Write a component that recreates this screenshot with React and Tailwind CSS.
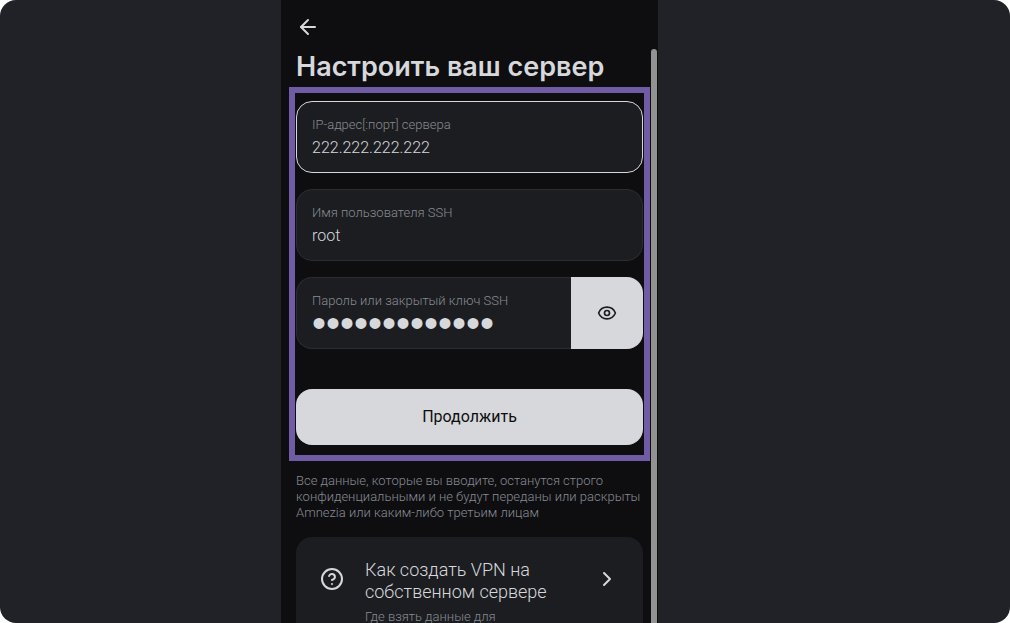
import { ArrowLeft, ChevronRight, CircleQuestionMark, Eye } from "lucide-react";

function Field({ id, label, value, type = "text", active, action }) {
  return (
    <div className="flex h-[72px]">
      <div
        className={
          "flex min-w-0 flex-1 flex-col border bg-[#1c1d21] px-[15px] pt-[15px] " +
          (active ? "border-[#d7d8db] " : "border-[#2c2d30] ") +
          (action ? "rounded-l-2xl border-r-0" : "rounded-2xl")
        }
      >
        <label htmlFor={id} className="text-[13px] leading-4 text-[#878b91]">
          {label}
        </label>
        <input
          id={id}
          type={type}
          defaultValue={value}
          className={
            "w-full bg-transparent text-[#d7d8db] outline-none " +
            (type === "password"
              ? "mt-0.5 h-6 font-['Liberation_Sans',sans-serif] text-[40px] leading-6"
              : "mt-[3px] h-6 text-base")
          }
        />
      </div>
      {action}
    </div>
  );
}

function RevealButton() {
  return (
    <button
      type="button"
      aria-label="Показать пароль"
      className="flex w-[72px] items-center justify-center rounded-r-2xl bg-[#d7d8db] text-[#1c1d21]"
    >
      <Eye size={20} strokeWidth={2} />
    </button>
  );
}

export default function App() {
  return (
    <div className="h-screen bg-white font-['Roboto',sans-serif] font-light">
      <div className="grid h-full grid-cols-[281fr_377px_352fr] overflow-hidden rounded-2xl bg-[#212227]">
        <main className="col-start-2 flex min-h-0 overflow-hidden bg-[#0e0e11] pl-2">
          <div className="min-w-0 flex-1">
            <button type="button" aria-label="Назад" className="mt-[15px] ml-[7px] block text-[#d7d8db]">
              <ArrowLeft size={24} />
            </button>
            <h1 className="mt-2 pl-[7px] font-['Inter',sans-serif] text-[27px] leading-10 font-semibold whitespace-nowrap text-[#d7d8db]">
              Настроить ваш сервер
            </h1>
            <form className="flex flex-col gap-4 border-6 border-[#6f5ca4] px-px pt-2 pb-[10px]">
              <Field id="host" label="IP-адрес[:порт] сервера" value="222.222.222.222" active />
              <Field id="user" label="Имя пользователя SSH" value="root" />
              <Field
                id="secret"
                label="Пароль или закрытый ключ SSH"
                value="serverpasswrd"
                type="password"
                action={<RevealButton />}
              />
              <button type="button" className="mt-6 h-14 rounded-2xl bg-[#d7d8db] text-base font-normal text-[#0e0e11]">
                Продолжить
              </button>
            </form>
            <p className="mt-3 pl-[7px] text-[13px] leading-4 whitespace-nowrap text-[#878b91]">
              Все данные, которые вы вводите, останутся строго
              <br />
              конфиденциальными и не будут переданы или раскрыты
              <br />
              Amnezia или каким-либо третьим лицам
            </p>
            <a href="#guide" className="mx-[7px] mt-4 flex h-32 rounded-2xl bg-[#1c1d21] px-6 pt-[22px] text-[#d7d8db]">
              <CircleQuestionMark size={24} className="mt-2 shrink-0" />
              <span className="ml-[21px] flex-1">
                <span className="block text-lg leading-[22px]">
                  Как создать VPN на
                  <br />
                  собственном сервере
                </span>
                <span className="mt-1.5 block text-[13px] leading-4 text-[#878b91]">Где взять данные для</span>
              </span>
              <ChevronRight size={24} className="mt-2 shrink-0" />
            </a>
          </div>
          <div className="mt-[49px] mr-px ml-px w-1.5 rounded-t-full bg-[#929292]" />
        </main>
      </div>
    </div>
  );
}
